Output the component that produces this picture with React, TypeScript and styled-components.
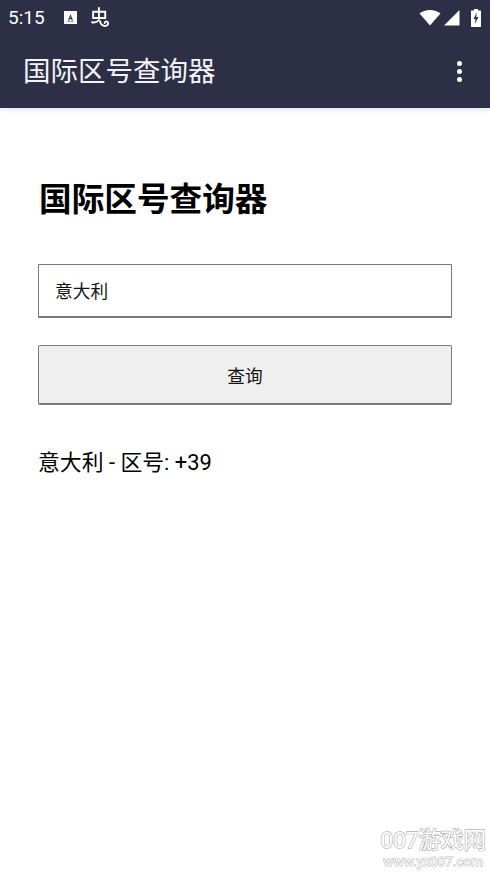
import React from 'react';
import styled, { createGlobalStyle } from 'styled-components';

const GlobalStyle = createGlobalStyle`
    html, body {
        margin: 0;
        padding: 0;
        background: #ffffff;
    }
    body {
        font-family: Roboto, "Noto Sans CJK SC", sans-serif;
    }
`;

const App = () => {
    return (
        <Page>
            <GlobalStyle />
            <Header>
                <StatusBar>
                    <StatusLeft>
                        <Clock>5:15</Clock>
                        <NoticeIcon viewBox="0 0 13 13">
                            <path fill="#fff" fillRule="evenodd" d="M0 0h13v13H0z M6.500 3 4 9.500h1.300l.5-1.400h1.400l.5 1.400H9L6.500 3z M6.500 5.300l.4 1.700H6.100z M3.500 10.400h6v.7h-6z" />
                        </NoticeIcon>
                        <AppIcon viewBox="0 0 20 20">
                            <path fill="none" stroke="#fff" strokeWidth="1.800" strokeLinecap="round" d="M8.500 1v10.500 M3 4.500h11.500v6H3z M2 14.500c2 .5 4 .2 6-1.500 M9.500 13.500c.5 3.500 3 5 5.500 4.500 2.500-.6 3-3 1.500-4 -1.200-.7-2.500 0-2.500 1.200" />
                        </AppIcon>
                    </StatusLeft>
                    <StatusRight>
                        <WifiIcon width="22" height="16" viewBox="0 0 22 16">
                            <path fill="#fff" d="M0.500 3.500C3.300 1.300 7 0 11 0s7.700 1.300 10.500 3.500L11 15.500z" />
                        </WifiIcon>
                        <SignalIcon width="16" height="16" viewBox="0 0 16 16">
                            <path fill="#fff" d="M0 15.500 15.500 0v15.500z" />
                        </SignalIcon>
                        <StatusIcon width="10" height="18" viewBox="0 0 10 18">
                            <path fill="#fff" fillRule="evenodd" d="M3 0h4v1.500h3V18H0V1.500h3z M5.800 3.500 2.500 10h2l-.6 5 3.600-7H5.300z" />
                        </StatusIcon>
                    </StatusRight>
                </StatusBar>
                <Toolbar>
                    <ToolbarTitle>国际区号查询器</ToolbarTitle>
                    <MoreButton>
                        <Dot />
                        <Dot />
                        <Dot />
                    </MoreButton>
                </Toolbar>
            </Header>
            <Content>
                <Title>国际区号查询器</Title>
                <Input>意大利</Input>
                <QueryButton>查询</QueryButton>
                <Result>意大利 - 区号: +39</Result>
            </Content>
            <Watermark>
                <WatermarkName>007游戏网</WatermarkName>
                <WatermarkUrl>www.yx007.com</WatermarkUrl>
            </Watermark>
        </Page>
    );
};

const Page = styled.div`
    position: relative;
    width: 490px;
    height: 872px;
    overflow: hidden;
    background: #ffffff;
`;

const Header = styled.header`
    background: #2c2f46;
    height: 108px;
    box-shadow: 0 2px 5px rgba(0, 0, 0, 0.1);
    display: flex;
    flex-direction: column;
`;

const StatusBar = styled.div`
    height: 35px;
    padding: 0 9px 0 8px;
    display: flex;
    align-items: center;
    justify-content: space-between;
`;

const StatusLeft = styled.div`
    display: flex;
    align-items: center;
`;

const Clock = styled.span`
    color: #ffffff;
    font-size: 19px;
    font-weight: 400;
    width: 56px;
`;

const NoticeIcon = styled.svg`
    width: 13px;
    height: 13px;
    margin-right: 13px;
`;

const AppIcon = styled.svg`
    width: 21px;
    height: 21px;
`;

const StatusRight = styled.div`
    display: flex;
    align-items: center;
`;

const StatusIcon = styled.svg`
    display: block;
`;

const WifiIcon = styled(StatusIcon)`
    margin-right: 3px;
`;

const SignalIcon = styled(StatusIcon)`
    margin-right: 11px;
`;

const Toolbar = styled.div`
    flex: 1;
    padding: 0 28px 0 23px;
    display: flex;
    align-items: center;
    justify-content: space-between;
`;

const ToolbarTitle = styled.div`
    color: #f4f4f6;
    font-size: 27.500px;
    line-height: 36px;
`;

const MoreButton = styled.div`
    display: flex;
    flex-direction: column;
    gap: 3px;
`;

const Dot = styled.span`
    width: 5px;
    height: 5px;
    border-radius: 50%;
    background: #ffffff;
`;

const Content = styled.main`
    padding: 70px 38px 0;
    display: flex;
    flex-direction: column;
`;

const Title = styled.h1`
    margin: 0 0 42px;
    font-size: 32.650px;
    line-height: 44px;
    font-weight: 700;
    color: #000000;
    padding-left: 1px;
`;

const Input = styled.div`
    box-sizing: border-box;
    height: 54px;
    padding: 0 16px 2px;
    border: 1px solid #7a7a7a;
    border-bottom-width: 2px;
    border-radius: 1px;
    display: flex;
    align-items: center;
    font-size: 17.700px;
    color: #111111;
    margin-bottom: 27px;
`;

const QueryButton = styled.div`
    box-sizing: border-box;
    height: 60px;
    border: 1px solid #7a7a7a;
    border-bottom-width: 2px;
    border-radius: 2px;
    background: #efefef;
    display: flex;
    align-items: center;
    justify-content: center;
    font-size: 17.700px;
    color: #111111;
    margin-bottom: 43px;
`;

const Result = styled.div`
    font-size: 21.850px;
    line-height: 30px;
    color: #000000;
`;

const Watermark = styled.div`
    position: absolute;
    right: 4px;
    bottom: 3px;
    display: flex;
    flex-direction: column;
    align-items: center;
`;

const WatermarkName = styled.div`
    font-size: 22.500px;
    line-height: 27px;
    color: #ffffff;
    -webkit-text-stroke: 1.4px #b4b4b4;
    paint-order: stroke fill;
`;

const WatermarkUrl = styled.div`
    font-size: 13.600px;
    line-height: 15px;
    color: #ffffff;
    -webkit-text-stroke: 1.1px #b4b4b4;
    paint-order: stroke fill;
`;

export default App;
